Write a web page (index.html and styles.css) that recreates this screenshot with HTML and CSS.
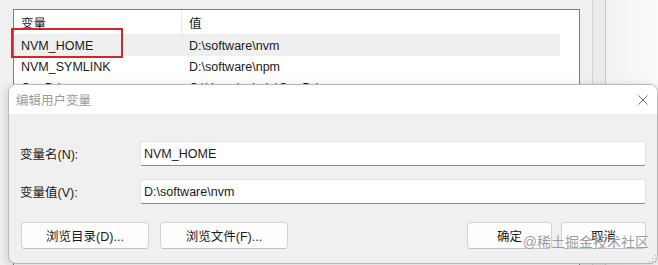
FILE: index.html
```html
<!DOCTYPE html>
<html lang="zh-CN">
<head>
  <meta charset="UTF-8">
  <meta name="viewport" content="width=device-width, initial-scale=1.0">
  <link rel="stylesheet" href="styles.css">
</head>
<body>

<div class="window">
  <div class="list-area">
    <div class="list">
      <div class="list-head">
        <div class="cell">变量</div>
        <div class="cell">值</div>
      </div>
      <div class="list-row selected">
        <div class="cell">NVM_HOME</div>
        <div class="cell">D:\software\nvm</div>
      </div>
      <div class="list-row">
        <div class="cell">NVM_SYMLINK</div>
        <div class="cell">D:\software\npm</div>
      </div>
      <div class="list-row">
        <div class="cell">OneDrive</div>
        <div class="cell">C:\Users\admin\OneDrive</div>
      </div>
    </div>
  </div>
  <div class="strip"></div>
  <div class="shade"></div>
</div>

<div class="highlight"></div>

<div class="dialog">
  <div class="titlebar">
    <span class="title">编辑用户变量</span>
    <svg class="close" width="10" height="10" viewBox="0 0 10 10">
      <path d="M0.5 0.5 L9.5 9.5 M9.5 0.5 L0.5 9.5" stroke="#5a5a5a" stroke-width="0.9" fill="none"/>
    </svg>
  </div>
  <div class="dialog-body">
    <div class="field">
      <label class="field-label">变量名(N):</label>
      <div class="input">NVM_HOME</div>
    </div>
    <div class="field">
      <label class="field-label">变量值(V):</label>
      <div class="input">D:\software\nvm</div>
    </div>
    <div class="buttons">
      <div class="btn-group left">
        <button class="btn wide">浏览目录(D)...</button>
        <button class="btn wide">浏览文件(F)...</button>
      </div>
      <div class="btn-group right">
        <button class="btn">确定</button>
        <button class="btn">取消</button>
      </div>
    </div>
  </div>
</div>

<div class="watermark">@稀土掘金技术社区</div>

<svg class="grip" width="8" height="8" viewBox="0 0 8 8">
  <rect x="6" y="0" width="1.2" height="1.2" fill="#b5b5b5"/>
  <rect x="3" y="3" width="1.2" height="1.2" fill="#b5b5b5"/>
  <rect x="6" y="3" width="1.2" height="1.2" fill="#b5b5b5"/>
  <rect x="0" y="6" width="1.2" height="1.2" fill="#b5b5b5"/>
  <rect x="3" y="6" width="1.2" height="1.2" fill="#b5b5b5"/>
  <rect x="6" y="6" width="1.2" height="1.2" fill="#9fc79f"/>
</svg>

</body>
</html>
```

FILE: styles.css
```css
* {
  box-sizing: border-box;
}

body {
  margin: 0;
  width: 658px;
  height: 265px;
  overflow: hidden;
  position: relative;
  background: #f0f0f0;
  font-family: "Liberation Sans", "Noto Sans CJK SC", sans-serif;
  font-size: 12.5px;
  color: #1a1a1a;
}

/* background window */
.window {
  display: flex;
  height: 265px;
}

.list-area {
  padding: 9px 12px 0 13px;
}

.list {
  width: 567px;
  height: 256px;
  background: #fff;
  border: 1px solid #7d7d7d;
  border-bottom: none;
}

.list-head,
.list-row {
  display: grid;
  grid-template-columns: 168px 378px;
  width: 546px;
  align-items: center;
}

.list-head {
  height: 25px;
  border-bottom: 1px solid #ececec;
}

.list-head .cell:first-child {
  border-right: 1px solid #e8e8e8;
  height: 100%;
  display: flex;
  align-items: center;
}

.list-row {
  height: 21px;
}

.list-row.selected {
  background: #efefef;
}

.cell {
  padding-left: 7px;
  white-space: nowrap;
}

.strip {
  width: 14px;
  background: #ececec;
  border-left: 1px solid #d2d2d2;
  border-right: 1px solid #c9c9c9;
}

.shade {
  flex: 1;
  background: linear-gradient(to right, #f2f2f2, #fbfbfb);
}

.highlight {
  position: absolute;
  left: 11px;
  top: 28px;
  width: 112px;
  height: 30px;
  border: 2px solid #d3262c;
}

/* edit dialog */
.dialog {
  position: absolute;
  left: 8px;
  top: 84px;
  width: 650px;
  height: 180px;
  background: #f0f0f0;
  border: 1px solid #b9b9b9;
  border-radius: 8px;
  overflow: hidden;
  box-shadow: 0 2px 10px rgba(0, 0, 0, 0.18);
}

.titlebar {
  height: 29px;
  background: #fff;
  display: flex;
  align-items: center;
  justify-content: space-between;
  padding: 0 9px 0 7px;
}

.title {
  color: #9b9b9b;
  font-size: 12.5px;
}

.dialog-body {
  padding: 27px 11px 0 11px;
}

.field {
  display: flex;
  align-items: center;
  height: 25px;
  margin-bottom: 13px;
}

.field-label {
  width: 120px;
}

.input {
  width: 506px;
  height: 25px;
  background: #fff;
  border: 1px solid #e2e2e2;
  border-bottom-color: #8a8a8a;
  border-radius: 3px;
  padding-left: 3px;
  display: flex;
  align-items: center;
}

.buttons {
  display: flex;
  justify-content: space-between;
  margin-top: 18px;
  padding: 0 1px;
  width: 627px;
}

.btn-group {
  display: flex;
}

.btn-group.left {
  gap: 11px;
}

.btn-group.right {
  gap: 9px;
}

.btn {
  width: 85px;
  height: 27px;
  background: #fdfdfd;
  border: 1px solid #d3d3d3;
  border-bottom-color: #c1c1c1;
  border-radius: 4px;
  font-family: inherit;
  font-size: 12.5px;
  color: #1a1a1a;
  padding: 0;
}

.btn.wide {
  width: 128px;
}

.watermark {
  position: absolute;
  right: 9px;
  top: 231px;
  font-size: 14px;
  color: rgba(130, 130, 130, 0.8);
  text-shadow: 0 0 1px rgba(255, 255, 255, 0.9);
  white-space: nowrap;
}

.grip {
  position: absolute;
  left: 649px;
  top: 255px;
}
```
